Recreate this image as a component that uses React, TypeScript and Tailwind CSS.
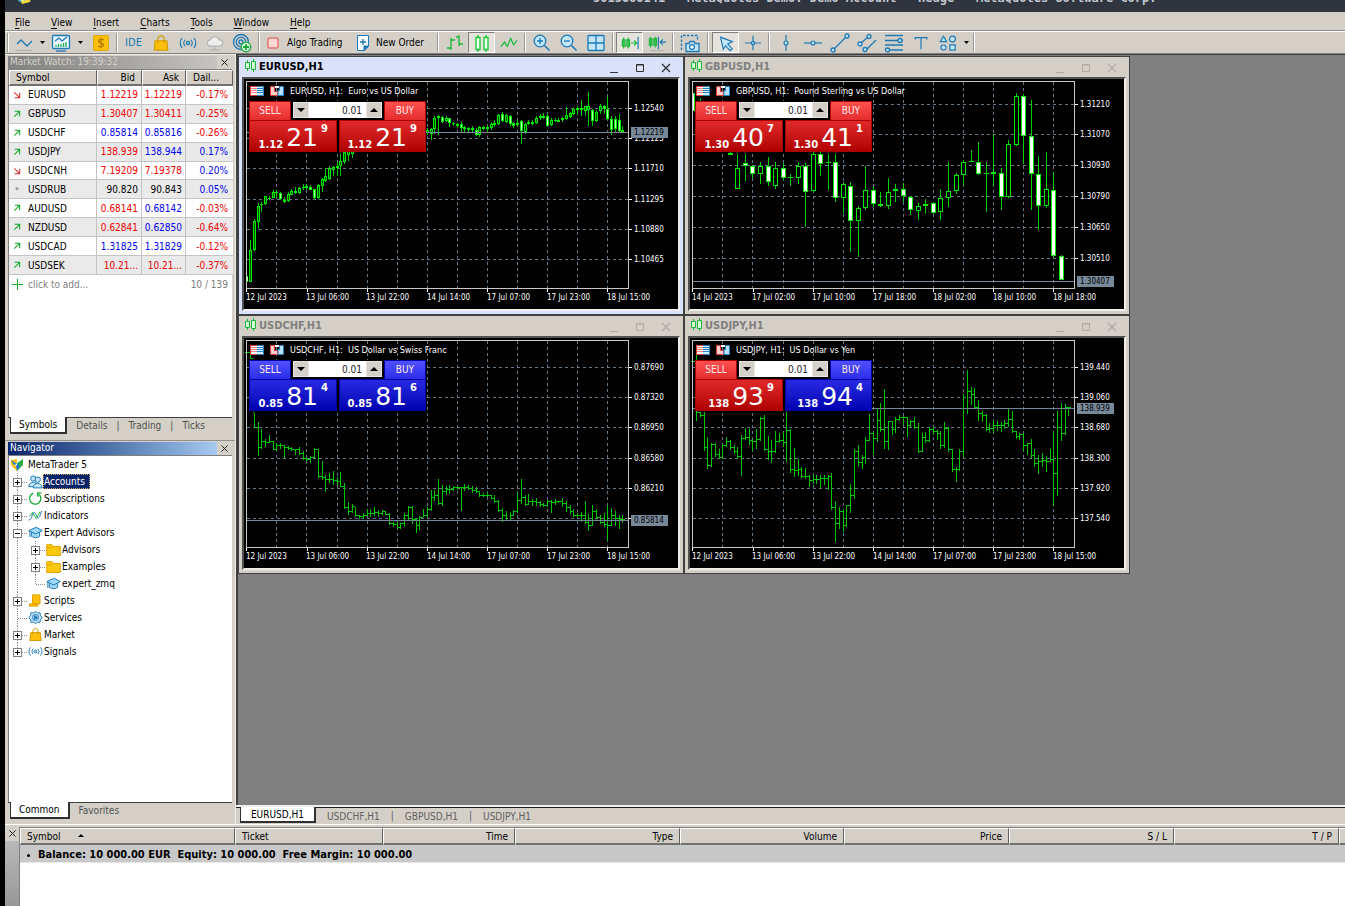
import React from "react";

/* ---------- chart data (pane units are thirds of a pixel) ---------- */

// [slot, high, low, bodyTop, bodyBottom, falling]
type Candle = [number, number, number, number, number, number];
// [high, low, close]
type Bar = [number, number, number];

const EUR: Candle[] = [
  [0, 660, 684, 664, 680, 1], [1, 555, 682, 586, 680, 0], [2, 492, 588, 498, 586, 0], [3, 445, 522, 452, 500, 0],
  [4, 440, 470, 448, 451, 0], [5, 422, 450, 424, 448, 0], [6, 424, 435, 428, 431, 1], [7, 406, 430, 411, 429, 0],
  [8, 406, 425, 411, 415, 1], [9, 411, 434, 413, 432, 1], [10, 425, 443, 434, 441, 0], [11, 410, 440, 418, 437, 0],
  [12, 402, 420, 408, 419, 0], [13, 395, 418, 409, 413, 0], [14, 396, 418, 398, 414, 0], [15, 386, 404, 395, 398, 0],
  [16, 388, 404, 394, 398, 1], [17, 390, 406, 396, 404, 1], [18, 401, 431, 403, 429, 1], [19, 388, 431, 390, 429, 0],
  [20, 368, 412, 372, 392, 0], [21, 340, 382, 362, 378, 0], [22, 334, 374, 338, 372, 0], [23, 334, 362, 337, 346, 0],
  [24, 322, 362, 334, 340, 0], [25, 296, 362, 318, 332, 0], [26, 285, 328, 290, 322, 0], [27, 280, 318, 285, 300, 0],
  [28, 270, 308, 280, 298, 0], [48, 220, 240, 225, 235, 0], [49, 220, 255, 222, 236, 0], [50, 182, 237, 190, 222, 0],
  [51, 180, 240, 184, 190, 0], [52, 182, 205, 186, 202, 1], [53, 183, 200, 188, 198, 0], [54, 188, 215, 190, 205, 1],
  [55, 200, 214, 203, 208, 1], [56, 204, 220, 208, 213, 1], [57, 202, 234, 208, 220, 1], [58, 212, 232, 215, 221, 1],
  [59, 216, 232, 218, 224, 1], [60, 214, 230, 220, 225, 1], [61, 220, 243, 224, 239, 1], [62, 212, 245, 217, 240, 0],
  [63, 214, 224, 217, 221, 0], [64, 210, 234, 216, 222, 0], [65, 202, 224, 206, 220, 0], [66, 196, 216, 204, 210, 0],
  [67, 176, 210, 180, 206, 0], [68, 170, 200, 178, 198, 1], [69, 178, 205, 180, 200, 0], [70, 180, 212, 184, 208, 1],
  [71, 200, 220, 205, 212, 1], [72, 196, 214, 205, 210, 0], [73, 196, 268, 199, 228, 1], [74, 204, 238, 208, 232, 0],
  [75, 196, 210, 202, 208, 0], [76, 195, 210, 200, 206, 0], [77, 184, 206, 188, 204, 0], [78, 178, 196, 184, 190, 0],
  [79, 174, 192, 182, 188, 0], [80, 178, 214, 182, 212, 1], [81, 188, 212, 194, 210, 0], [82, 190, 202, 194, 198, 0],
  [83, 188, 202, 194, 200, 0], [84, 186, 200, 190, 195, 0], [85, 156, 196, 180, 192, 0], [86, 170, 190, 174, 186, 0],
  [87, 158, 180, 163, 176, 0], [88, 154, 178, 160, 166, 0], [89, 136, 184, 158, 166, 0], [90, 152, 184, 154, 168, 0],
  [91, 110, 214, 154, 164, 0], [92, 162, 212, 166, 198, 1], [93, 166, 200, 170, 198, 0], [94, 146, 176, 154, 168, 0],
  [95, 150, 176, 152, 162, 1], [96, 125, 196, 162, 192, 1], [97, 184, 240, 192, 226, 1], [98, 182, 230, 192, 222, 1],
  [99, 178, 232, 194, 228, 1], [100, 214, 232, 226, 231, 1],
];

const GBP: Candle[] = [
  [0, 110, 170, 115, 168, 1], [1, 130, 180, 150, 170, 0], [5, 290, 300, 295, 299, 0], [6, 296, 403, 340, 401, 0],
  [7, 296, 378, 324, 334, 1], [8, 330, 370, 334, 356, 1], [9, 322, 388, 332, 358, 0], [10, 306, 394, 332, 382, 1],
  [11, 322, 402, 340, 392, 0], [12, 324, 374, 340, 368, 1], [13, 356, 392, 365, 368, 0], [14, 320, 388, 334, 368, 0],
  [15, 324, 515, 334, 410, 1], [16, 290, 412, 296, 408, 0], [17, 290, 362, 296, 326, 1], [18, 296, 404, 321, 324, 0],
  [19, 296, 440, 322, 428, 1], [20, 382, 474, 388, 428, 0], [21, 380, 592, 392, 498, 1], [22, 452, 607, 458, 498, 0],
  [23, 334, 466, 406, 460, 0], [24, 394, 456, 406, 446, 1], [25, 412, 456, 446, 452, 1], [26, 370, 462, 412, 452, 0],
  [27, 388, 440, 402, 408, 0], [28, 384, 440, 402, 424, 1], [29, 424, 480, 426, 466, 1], [30, 444, 496, 454, 468, 0],
  [31, 432, 478, 446, 454, 0], [32, 442, 476, 444, 474, 1], [33, 402, 496, 430, 472, 0], [34, 320, 456, 408, 430, 0],
  [35, 354, 418, 360, 408, 0], [36, 314, 390, 322, 360, 0], [37, 284, 322, 319, 322, 0], [38, 262, 360, 322, 358, 1],
  [39, 320, 470, 355, 358, 0], [40, 236, 392, 352, 358, 0], [41, 338, 464, 354, 426, 1], [42, 256, 428, 268, 426, 0],
  [43, 114, 272, 124, 270, 0], [44, 116, 326, 122, 244, 1], [45, 136, 466, 242, 358, 1], [46, 304, 526, 356, 454, 1],
  [47, 292, 460, 402, 452, 0], [48, 352, 610, 404, 604, 1], [49, 600, 676, 604, 676, 1],
];

const CHF: Bar[] = [
  [110, 114, 112], [112, 132, 130], [292, 338, 336], [320, 422, 397], [342, 400, 380], [370, 396, 381], [360, 384, 380],
  [376, 404, 402], [382, 406, 390], [384, 402, 392], [388, 428, 396], [392, 404, 400], [394, 408, 404], [400, 418, 402],
  [394, 420, 414], [406, 434, 430], [424, 438, 434], [422, 442, 428], [398, 432, 402], [400, 488, 484], [438, 494, 488],
  [480, 530, 492], [474, 502, 494], [468, 510, 496], [486, 508, 500], [470, 516, 514], [502, 580, 577], [560, 600, 588],
  [566, 594, 575], [574, 604, 602], [598, 610, 604], [594, 610, 600], [580, 602, 596], [584, 606, 596], [576, 602, 592],
  [584, 606, 594], [584, 600, 590], [586, 600, 598], [594, 630, 626], [620, 634, 628], [620, 642, 636], [622, 640, 626],
  [594, 636, 600], [572, 618, 576], [572, 626, 612], [608, 652, 630], [602, 644, 606], [582, 606, 602], [576, 606, 584],
  [524, 588, 546], [524, 556, 540], [490, 570, 564], [510, 572, 530], [512, 540, 524], [508, 536, 522], [512, 526, 518],
  [512, 524, 518], [514, 586, 518], [506, 526, 518], [508, 524, 520], [512, 532, 526], [516, 532, 530], [526, 546, 540],
  [532, 546, 540], [530, 546, 542], [538, 552, 550], [540, 562, 558], [554, 590, 586], [578, 620, 600], [586, 618, 616],
  [590, 618, 600], [584, 602, 590], [530, 594, 556], [492, 566, 546], [540, 572, 568], [536, 570, 560], [552, 572, 558],
  [548, 572, 562], [558, 576, 568], [564, 576, 572], [554, 574, 560], [554, 592, 562], [552, 568, 560], [556, 564, 560],
  [548, 574, 566], [558, 590, 578], [570, 596, 590], [580, 606, 600], [592, 606, 602], [590, 620, 600], [556, 626, 622],
  [596, 646, 632], [570, 632, 590], [580, 610, 606], [600, 626, 622], [594, 634, 628], [572, 676, 630], [578, 632, 600],
  [586, 632, 610], [600, 642, 614], [598, 622, 612],
];

const JPY: Bar[] = [
  [136, 140, 138], [110, 316, 292], [290, 306, 302], [290, 406, 398], [366, 462, 450], [382, 454, 388], [384, 424, 418],
  [402, 430, 426], [388, 430, 392], [366, 396, 378], [374, 404, 396], [390, 416, 408], [394, 430, 424], [360, 482, 370],
  [338, 374, 366], [340, 388, 376], [370, 406, 380], [342, 400, 374], [304, 378, 310], [298, 408, 404], [362, 434, 408],
  [374, 444, 410], [348, 414, 380], [354, 384, 376], [350, 396, 382], [290, 440, 346], [342, 474, 464], [398, 486, 466],
  [432, 482, 462], [456, 488, 484], [458, 490, 484], [480, 516, 496], [478, 506, 494], [480, 506, 492], [478, 518, 490],
  [480, 508, 490], [480, 524, 484], [472, 584, 576], [558, 680, 626], [576, 642, 588], [580, 650, 632], [568, 634, 572],
  [506, 592, 540], [400, 550, 410], [388, 452, 442], [420, 462, 426], [366, 446, 376], [296, 376, 356], [350, 416, 370],
  [280, 380, 316], [262, 350, 344], [222, 402, 380], [316, 404, 320], [318, 358, 342], [304, 352, 312], [300, 316, 306],
  [302, 330, 306], [304, 364, 330], [314, 334, 318], [306, 340, 338], [324, 412, 408], [352, 410, 366], [350, 384, 376],
  [334, 380, 342], [334, 358, 350], [344, 374, 354], [346, 402, 392], [320, 398, 340], [334, 410, 404], [402, 470, 464],
  [456, 500, 464], [400, 468, 410], [236, 424, 280], [164, 296, 230], [214, 270, 238], [218, 280, 276], [254, 316, 296],
  [286, 320, 300], [296, 348, 344], [324, 354, 340], [318, 354, 330], [316, 346, 330], [320, 350, 330], [314, 342, 326],
  [280, 336, 314], [286, 354, 350], [346, 370, 364], [352, 374, 358], [354, 406, 392], [382, 420, 384], [370, 428, 422],
  [402, 456, 446], [420, 476, 440], [412, 456, 436], [422, 470, 440], [402, 440, 434], [346, 572, 474], [288, 542, 336],
  [262, 378, 354], [266, 360, 278], [274, 302, 278],
];

const px = (v: number) => Math.round(v / 3);

function Candles({ data, pitch, width }: { data: Candle[]; pitch: number; width: number }) {
  const half = (width - 1) / 2;
  return (
    <g shapeRendering="crispEdges">
      {data.map(([i, h, l, t, b, down]) => {
        const x = px(25 + pitch * i);
        const top = px(t);
        const bodyH = Math.max(1, px(b) - top);
        const left = Math.max(8, x - half);
        return (
          <g key={i}>
            <rect x={x} y={px(h)} width={1} height={Math.max(1, px(l) - px(h))} fill="#00d000" />
            <rect x={left} y={top} width={x + half + 1 - left} height={bodyH} fill="#00ee00" />
            {bodyH > 2 && (
              <rect
                x={left + 1}
                y={top + 1}
                width={Math.max(1, x + half - left - 1)}
                height={bodyH - 2}
                fill={down ? (width > 3 ? "#ffffff" : "#b0ffb0") : width > 3 ? "#000000" : "#005000"}
              />
            )}
          </g>
        );
      })}
    </g>
  );
}

function Bars({ data }: { data: Bar[] }) {
  return (
    <g shapeRendering="crispEdges" fill="#00c800">
      {data.map(([h, l, c], i) => {
        const x = px(25 + 11.28 * i);
        const open = i ? data[i - 1][2] : c;
        const o = Math.min(Math.max(open, h), l);
        return (
          <g key={i}>
            <rect x={x} y={px(h + 4)} width={1} height={Math.max(1, px(l + 4) - px(h + 4))} />
            <rect x={x - 1} y={px(o + 2)} width={1} height={1} />
            <rect x={x + 1} y={px(c + 2)} width={2} height={1} />
          </g>
        );
      })}
    </g>
  );
}

type ChartSpec = {
  symbol: string;
  name: string;
  active?: boolean;
  sell: [string, string, string];
  buy: [string, string, string];
  sellUp?: boolean;
  buyUp?: boolean;
  grid: number[];
  scale: string[];
  dates: string[];
  price: string;
  priceY: number;
  series: React.ReactNode;
};

const DATES = ["12 Jul 2023", "13 Jul 06:00", "13 Jul 22:00", "14 Jul 14:00", "17 Jul 07:00", "17 Jul 23:00", "18 Jul 15:00"];
const EVEN = [160, 250, 340, 431, 521, 611];

const CHARTS: ChartSpec[] = [
  {
    symbol: "EURUSD", name: "Euro vs US Dollar", active: true, sell: ["1.12", "21", "9"], buy: ["1.12", "21", "9"],
    grid: EVEN, scale: ["1.12540", "1.12125", "1.11710", "1.11295", "1.10880", "1.10465"], dates: DATES,
    price: "1.12219", priceY: 231, series: <Candles data={EUR} pitch={11.28} width={3} />,
  },
  {
    symbol: "GBPUSD", name: "Pound Sterling vs US Dollar", sell: ["1.30", "40", "7"], buy: ["1.30", "41", "1"],
    grid: [146, 237, 329, 422, 516, 608], scale: ["1.31210", "1.31070", "1.30930", "1.30790", "1.30650", "1.30510"],
    dates: ["14 Jul 2023", "17 Jul 02:00", "17 Jul 10:00", "17 Jul 18:00", "18 Jul 02:00", "18 Jul 10:00", "18 Jul 18:00"],
    price: "1.30407", priceY: 677, series: <Candles data={GBP} pitch={22.56} width={5} />,
  },
  {
    symbol: "USDCHF", name: "US Dollar vs Swiss Franc", sell: ["0.85", "81", "4"], buy: ["0.85", "81", "6"], sellUp: true, buyUp: true,
    grid: EVEN, scale: ["0.87690", "0.87320", "0.86950", "0.86580", "0.86210", ""], dates: DATES,
    price: "0.85814", priceY: 617, series: <Bars data={CHF} />,
  },
  {
    symbol: "USDJPY", name: "US Dollar vs Yen", sell: ["138", "93", "9"], buy: ["138", "94", "4"], buyUp: true,
    grid: EVEN, scale: ["139.440", "139.060", "138.680", "138.300", "137.920", "137.540"], dates: DATES,
    price: "138.939", priceY: 281, series: <Bars data={JPY} />,
  },
];

function PlotArea({ spec }: { spec: ChartSpec }) {
  return (
    <svg
      viewBox="6 24 434 230"
      width={434}
      height={230}
      className="block bg-black font-['DejaVu_Sans_Condensed','DejaVu_Sans',sans-serif] text-[8px]"
      role="img"
      aria-label={`${spec.symbol} hourly chart`}
    >
      <g stroke="#66778a" strokeDasharray="3 3" shapeRendering="crispEdges">
        {Array.from({ length: 12 }, (_, k) => {
          const x = px(115 + 90.25 * k) + 0.5;
          return <path key={k} d={`M${x} 27V234`} />;
        })}
        {spec.grid.map((y) => (
          <path key={y} d={`M9 ${px(y) + 0.5}H391`} />
        ))}
      </g>
      {spec.series}
      <path d={`M9 ${px(spec.priceY) + 0.5}H391`} stroke="#778899" shapeRendering="crispEdges" />
      <rect x="8.5" y="26.5" width="382" height="207" fill="none" stroke="#c8c8c8" shapeRendering="crispEdges" />
      <g fill="#fff">
        {spec.grid.map((y, i) => (
          <g key={y}>
            <rect x="391" y={px(y)} width="3" height="1" />
            <text x="396" y={px(y) + 3}>{spec.scale[i]}</text>
          </g>
        ))}
        {spec.dates.map((d, i) => (
          <g key={d}>
            <rect x={px(25 + 180.5 * i)} y="234" width="1" height="3" />
            <text x={px(24 + 180.5 * i)} y="245">{d}</text>
          </g>
        ))}
        <text x="52" y="39" className="text-[9px]">{`${spec.symbol}, H1:\u00a0 ${spec.name}`}</text>
      </g>
      <rect x="393" y={px(spec.priceY) - 5} width="37" height="11" fill="#778899" />
      <text x="396" y={px(spec.priceY) + 3} fill="#000">{spec.price}</text>
      <g>
        <rect x="12.5" y="31.5" width="13" height="9" fill="#fff" stroke="#e33b36" />
        <path d="M19 31.5h6.500v9H19" fill="#d8eeff" stroke="#2383c4" />
        <path d="M13 33.500h6M13 35.500h6M13 37.500h6" stroke="#f0847c" />
        <path d="M19 33.500h6M19 35.500h6M19 37.500h6" stroke="#2383c4" />
        <path d="M32.500 31.500h4v5l3 0v4h-7z" fill="#ffd0cc" stroke="#e33b36" />
        <path d="M45.500 31.500h-4v4h-1.500v5h5.500z" fill="#b8e0ff" stroke="#2383c4" />
        <path d="M37 31h4v2h-4z" fill="#fff" />
      </g>
    </svg>
  );
}

function PriceButton({ side, parts, up, right }: { side: string; parts: [string, string, string]; up?: boolean; right?: boolean }) {
  return (
    <button
      aria-label={`${side} at ${parts.join("")}`}
      className={`relative flex h-8 items-end justify-end gap-[3px] border pr-2 text-white ${
        right ? "w-[87px]" : "w-[88px]"
      } ${up ? "border-[#0000a0] bg-linear-to-b from-[#2828e4] to-[#0000b0]" : "border-[#a80000] bg-linear-to-b from-[#e22828] to-[#b00000]"}`}
    >
      <span className="text-[10px] leading-3 font-bold">{parts[0]}</span>
      <span className="text-[25px] leading-[27px]">{parts[1]}</span>
      <span className="self-start pt-[2px] text-[10px] leading-3 font-bold">{parts[2]}</span>
    </button>
  );
}

function SideTab({ label, up }: { label: string; up?: boolean }) {
  return (
    <button
      className={`h-[19px] w-[42px] border border-b-0 px-[3px] font-['DejaVu_Sans_Condensed','DejaVu_Sans',sans-serif] text-[10px] leading-[18px] text-[#ffe8e8] ${
        up ? "border-[#0000a0] bg-linear-to-b from-[#5050ff] to-[#2c2ce8]" : "border-[#a80000] bg-linear-to-b from-[#ff5050] to-[#e42c2c]"
      }`}
    >
      <span className={`block border-b ${up ? "border-[#0000a8]" : "border-[#b80000]"}`}>{label}</span>
    </button>
  );
}

function TradePanel({ spec }: { spec: ChartSpec }) {
  return (
    <div className="absolute top-[22px] left-[5px] w-[177px] bg-black font-['DejaVu_Sans',sans-serif]">
      <div className="flex justify-between">
        <SideTab label="SELL" up={spec.sellUp} />
        <div className="mt-px flex h-4 w-[89px] text-black">
          <button aria-label="Decrease volume" className="grid w-4 place-items-center border border-[#e8e6e0] bg-[#d4d0c8]">
            <Caret />
          </button>
          <input
            aria-label={`${spec.symbol} volume`}
            defaultValue="0.01"
            className="w-0 min-w-0 flex-1 bg-white pr-1 text-right font-['DejaVu_Sans_Condensed','DejaVu_Sans',sans-serif] text-[10px] text-[#222] outline-none"
          />
          <button aria-label="Increase volume" className="grid w-4 place-items-center border border-[#e8e6e0] bg-[#d4d0c8]">
            <Caret up />
          </button>
        </div>
        <SideTab label="BUY" up={spec.buyUp} />
      </div>
      <div className="flex justify-between">
        <PriceButton side="Sell" parts={spec.sell} up={spec.sellUp} />
        <PriceButton side="Buy" parts={spec.buy} up={spec.buyUp} right />
      </div>
    </div>
  );
}

function ChartWindow({ spec }: { spec: ChartSpec }) {
  const tone = spec.active ? "bg-[#d9e1fb] text-black" : "bg-[#d4d0c8] text-[#808080]";
  const mark = spec.active ? "#303030" : "#b0aca4";
  return (
    <section className={`h-[259px] w-[446px] border border-[#404040] px-[3px] ${tone}`}>
      <header className="flex h-5 items-center pb-[2px] pl-[3px]">
        <svg width="12" height="14" viewBox="0 0 12 14" fill="#d8ffd8" stroke="#18b838">
          <path d="M2.500 1v11M8.500 0v13" />
          <path d="M.5 3.500h4v6h-4zM6.500 2.500h4v8h-4z" />
        </svg>
        <h2 className="ml-[2px] font-['DejaVu_Sans_Condensed','DejaVu_Sans',sans-serif] text-[11px] font-bold">{spec.symbol},H1</h2>
        <div className="ml-auto flex gap-3 pt-1 pr-[7px]">
          <button aria-label="Minimize">
            <svg width="14" height="12" viewBox="0 0 14 12"><path d="M3 10.500h8" stroke={mark} /></svg>
          </button>
          <button aria-label="Maximize">
            <svg width="14" height="12" viewBox="0 0 14 12" fill="none"><path d="M3.500 2.500h7v7h-7zM3 3h8" stroke={mark} /></svg>
          </button>
          <button aria-label="Close">
            <svg width="14" height="12" viewBox="0 0 14 12"><path d="M3 2l8 8M11 2l-8 8" stroke={mark} strokeWidth="1.300" /></svg>
          </button>
        </div>
      </header>
      <div className="relative border-2 border-t-[#505050] border-r-[#f0eee8] border-b-[#f0eee8] border-l-[#505050]">
        <PlotArea spec={spec} />
        <TradePanel spec={spec} />
      </div>
    </section>
  );
}

/* ---------- small drawing helpers ---------- */

function Caret({ up }: { up?: boolean }) {
  return (
    <svg width="8" height="4" viewBox="0 0 8 4">
      <path d={up ? "M0 4L4 0L8 4z" : "M0 0L4 4L8 0z"} fill="#000" />
    </svg>
  );
}

function Ico({ children, size = 20 }: { children: React.ReactNode; size?: number }) {
  return (
    <svg width={size} height={size} viewBox="0 0 20 20" fill="none" stroke="#1d78b5" strokeWidth="1.300">
      {children}
    </svg>
  );
}

function Tool({ label, on, children, w = "w-[27px]" }: { label: string; on?: boolean; children: React.ReactNode; w?: string }) {
  return (
    <button
      aria-label={label}
      title={label}
      className={`grid h-[21px] shrink-0 place-items-center ${w} ${
        on ? "border border-t-[#808080] border-r-white border-b-white border-l-[#808080] bg-[#e6e3dd]" : ""
      }`}
    >
      {children}
    </button>
  );
}

function Sep({ w = "w-[6px]" }: { w?: string }) {
  return (
    <span className={`flex h-[19px] shrink-0 justify-center ${w}`}>
      <span className="w-[2px] border-r border-l border-r-white border-l-[#999]" />
    </span>
  );
}

function ToolArrow({ w }: { w: string }) {
  return (
    <button aria-label="More options" className={`grid shrink-0 place-items-center ${w}`}>
      <svg width="5" height="3" viewBox="0 0 5 3"><path d="M0 0h5L2.500 3z" fill="#000" /></svg>
    </button>
  );
}

const BAG = (
  <g stroke="#d79a00">
    <path d="M3.500 7.500h13l1 10.500h-15z" fill="#fcc00c" />
    <path d="M6.500 10V5.500a3.500 3.500 0 0 1 7 0V10" />
  </g>
);
const CAP = (
  <g fill="#9fd8fa">
    <path d="M4.500 9v6c3 2.500 8 2.500 11 0V9" />
    <path d="M1 7.500L11 3l8 4.500L10 12z" />
    <path d="M2.500 8v8" />
  </g>
);
const WAVES = (
  <g>
    <circle cx="10" cy="10" r="1.800" fill="#9fd8fa" />
    <path d="M6.800 6.500a5 5 0 0 0 0 7M13.200 6.500a5 5 0 0 1 0 7M3.500 4.500a8 8 0 0 0 0 11M16.500 4.500a8 8 0 0 1 0 11" />
  </g>
);

function Toolbar() {
  return (
    <div role="toolbar" className="flex h-[23px] items-center border-t border-b border-t-white border-b-[#808080]">
      <Sep w="w-[5px]" />
      <Tool label="Chart type"><Ico><path d="M3 11l4-4 6 6 5-5" /><path d="M2 17.500h16" stroke="#b0b0b0" /></Ico></Tool>
      <ToolArrow w="w-[10px]" />
      <Tool label="Templates">
        <Ico><rect x="1.500" y="2.500" width="17" height="13" rx="1" fill="#e8f6ff" /><path d="M4 8l4-3 3 3 5-4" /><path d="M5 14v-2M7.500 14v-3M10 14v-3M12.500 14v-4M15 14v-5" stroke="#22b14c" /><path d="M5 18h10" /></Ico>
      </Tool>
      <ToolArrow w="w-[13px]" />
      <Tool label="Deposits">
        <svg width="18" height="18" viewBox="0 0 18 18">
          <rect x="1.500" y="1.500" width="15" height="15" rx="1" fill="#fcc00c" stroke="#e0a800" />
          <path d="M12 6.200C11 5 7 4.800 6.500 7c-.2 2.600 5.400 1.600 5.300 4.200C11.500 13.500 7 13.200 6 11.800M9 3.500v11" fill="none" stroke="#b07800" strokeWidth="1.200" />
        </svg>
      </Tool>
      <Sep />
      <Tool label="MetaEditor"><span className="text-[11px] leading-4 text-[#1d78b5]">IDE</span></Tool>
      <Tool label="Market"><Ico size={18}>{BAG}</Ico></Tool>
      <Tool label="Signals"><Ico size={18}>{WAVES}</Ico></Tool>
      <Tool label="Virtual hosting"><Ico size={18}><g stroke="#b4b4b4"><path d="M5 13.500a3.500 3.500 0 0 1 0-7a5 5 0 0 1 9.500 0a3.500 3.500 0 0 1 1 7z" fill="#eee" /><path d="M10 14v4M4 18h12" /></g></Ico></Tool>
      <Tool label="Community">
        <Ico><circle cx="9" cy="9" r="7.500" /><circle cx="9" cy="9" r="4.800" /><circle cx="9" cy="9" r="2" /><circle cx="14" cy="14" r="4.800" fill="#d8ffe0" stroke="#18a838" /><path d="M14 11v6M11 14h6" stroke="#18a838" strokeWidth="1.800" /></Ico>
      </Tool>
      <Sep w="w-[7px]" />
      <button className="flex w-[86px] shrink-0 items-center gap-2 pl-[5px]">
        <svg width="12" height="12" viewBox="0 0 12 12"><rect x="1" y="1" width="10" height="10" rx="1" fill="#fdd8d4" stroke="#e0443c" /></svg>
        <span className="whitespace-nowrap">Algo Trading</span>
      </button>
      <button className="flex w-[87px] shrink-0 items-center gap-[6px] pl-2">
        <svg width="14" height="18" viewBox="0 0 14 18" fill="#f4fbff" stroke="#1d78b5"><path d="M1.500 1.500h11v11l-4 4h-7z" /><path d="M12.500 12l-4.500 4.500V12z" fill="#1d78b5" /><path d="M7 5v6M4 8h6" strokeWidth="1.300" /></svg>
        <span className="whitespace-nowrap">New Order</span>
      </button>
      <Sep />
      <Tool label="Bar chart"><Ico><path d="M6 5v12M2 15h4M6 7h4M14 2v11M11 4h3M14 11h4" stroke="#18b838" /></Ico></Tool>
      <Tool label="Candlesticks" on><Ico><path d="M6 2v17M14 2v17" stroke="#18b838" /><path d="M4 4.500h4v12H4zM12 4.500h4v12h-4z" fill="#eaffea" stroke="#18c838" /></Ico></Tool>
      <Tool label="Line chart"><Ico size={18}><path d="M1 14l4-5 3 5 4-9 3 7 4-5" stroke="#18b838" /></Ico></Tool>
      <Sep />
      <Tool label="Zoom in"><Ico><circle cx="8" cy="8" r="5.800" fill="#c4e6fc" /><path d="M12.500 12.500l5 5" strokeWidth="1.600" /><path d="M8 5v6M5 8h6" /></Ico></Tool>
      <Tool label="Zoom out"><Ico><circle cx="8" cy="8" r="5.800" fill="#c4e6fc" /><path d="M12.500 12.500l5 5" strokeWidth="1.600" /><path d="M5 8h6" /></Ico></Tool>
      <Tool label="Tile windows"><Ico><rect x="2" y="2.500" width="16" height="15" rx="1" fill="#c4e6fc" /><path d="M10 2.500v15M2 10h16" /></Ico></Tool>
      <Sep w="w-[7px]" />
      <Tool label="Auto scroll" on><Ico size={18}><path d="M3 4v12M8 4v12M1.500 6.500h3v7h-3zM6.500 6.500h3v7h-3zM11 10h6M14.500 7l3 3-3 3" stroke="#18b838" /><path d="M19 3v14" /></Ico></Tool>
      <Tool label="Chart shift"><Ico size={18}><path d="M3 3v12M8 3v12M1.500 5.500h3v7h-3zM6.500 5.500h3v7h-3z" stroke="#18b838" /><path d="M11.500 3v14M20 9h-6M16.500 6l-3 3 3 3" /><path d="M2 18.500h16" stroke="#b0b0b0" /></Ico></Tool>
      <Sep />
      <Tool label="Screenshot"><Ico><path d="M1.500 17V2.500h16V8" strokeDasharray="2.500 1.500" /><path d="M6 10.500h3l1-2h4l1 2h4v8H6z" fill="#c4e6fc" /><circle cx="12" cy="14" r="2.400" fill="#fff" /></Ico></Tool>
      <Sep w="w-[9px]" />
      <Tool label="Cursor" on><Ico size={18}><path d="M4 3.500l13 5-5 2.500 5 5.500-2.500 2-5-5.500-2.500 4z" fill="#c4e6fc" /></Ico></Tool>
      <Tool label="Crosshair"><Ico size={18}><path d="M10 2v16M1 10h18" /><circle cx="10" cy="10" r="1.800" fill="#9fd8fa" /></Ico></Tool>
      <Sep />
      <Tool label="Vertical line"><Ico size={18}><path d="M10 1v18" /><circle cx="10" cy="10" r="2.200" fill="#c4e6fc" /></Ico></Tool>
      <Tool label="Horizontal line"><Ico size={18}><path d="M0 10h20" /><circle cx="10" cy="10" r="2.200" fill="#c4e6fc" /></Ico></Tool>
      <Tool label="Trendline"><Ico><path d="M3 17L17 3" /><circle cx="3" cy="17" r="2" fill="#c4e6fc" /><circle cx="17" cy="3" r="2" fill="#c4e6fc" /></Ico></Tool>
      <Tool label="Channel"><Ico><path d="M3 11l9-8M9 17l10-10" /><circle cx="3" cy="11" r="2" fill="#c4e6fc" /><circle cx="12" cy="3.500" r="2" fill="#c4e6fc" /><circle cx="8" cy="16.500" r="2" fill="#c4e6fc" /></Ico></Tool>
      <Tool label="Fibonacci"><Ico><path d="M1 2.500h18M1 7.500h18M1 12h18M1 17h18" /><circle cx="16" cy="7.500" r="2" fill="#c4e6fc" /><circle cx="3.500" cy="17" r="2" fill="#c4e6fc" /></Ico></Tool>
      <Tool label="Text label"><Ico size={18}><path d="M3.500 6V4h13v2M10 4v13" /></Ico></Tool>
      <Tool label="Shapes"><Ico size={18}><path d="M5 2.500l3.500 6h-7z" fill="#c4e6fc" /><circle cx="15" cy="5.500" r="3.200" fill="#c4e6fc" /><circle cx="5" cy="15" r="2.800" fill="#c4e6fc" /><path d="M12 12h6v6h-6z" fill="#c4e6fc" /></Ico></Tool>
      <ToolArrow w="w-[10px]" />
      <Sep />
    </div>
  );
}

const MENU = ["File", "View", "Insert", "Charts", "Tools", "Window", "Help"];

/* ---------- market watch ---------- */

type Quote = [string, "u" | "d" | "n", string, string, string, string, string, string];
const R = "text-[#f00000]";
const B = "text-[#0000f0]";
const K = "text-black";
const QUOTES: Quote[] = [
  ["EURUSD", "d", "1.12219", R, "1.12219", R, "-0.17%", R],
  ["GBPUSD", "u", "1.30407", R, "1.30411", R, "-0.25%", R],
  ["USDCHF", "u", "0.85814", B, "0.85816", B, "-0.26%", R],
  ["USDJPY", "u", "138.939", R, "138.944", B, "0.17%", B],
  ["USDCNH", "d", "7.19209", R, "7.19378", R, "0.20%", B],
  ["USDRUB", "n", "90.820", K, "90.843", K, "0.05%", B],
  ["AUDUSD", "u", "0.68141", R, "0.68142", B, "-0.03%", R],
  ["NZDUSD", "u", "0.62841", R, "0.62850", B, "-0.64%", R],
  ["USDCAD", "u", "1.31825", B, "1.31829", B, "-0.12%", R],
  ["USDSEK", "u", "10.21...", R, "10.21...", R, "-0.37%", R],
];

function Trend({ dir }: { dir: "u" | "d" | "n" }) {
  return (
    <svg width="8" height="8" viewBox="0 0 9 9" fill="none" strokeWidth="1.200" className="shrink-0">
      {dir === "u" && <path d="M1.500 7.500l6-6M2 1.500h5.500V7" stroke="#10a828" />}
      {dir === "d" && <path d="M1.500 1.500l6 6M7.500 2v5.500H2" stroke="#d83028" />}
      {dir === "n" && <circle cx="4.500" cy="4" r="1.800" fill="#a0a0a0" />}
    </svg>
  );
}

function Caption({ title, active }: { title: string; active?: boolean }) {
  return (
    <div className="flex h-[13px] items-center">
      <h2
        className={`h-full flex-1 pl-[2px] leading-[12px] ${
          active ? "bg-linear-to-r from-[#0a246a] to-[#a6caf0] text-white" : "bg-linear-to-r from-[#808080] to-[#c6c4c0] text-[#d4d0c8]"
        }`}
      >
        {title}
      </h2>
      <CloseX />
    </div>
  );
}

function CloseX() {
  return (
    <button aria-label="Close panel" className="grid h-[13px] w-[15px] place-items-center">
      <svg width="7" height="7" viewBox="0 0 7 7"><path d="M.5.5l6 6M6.500.5l-6 6" stroke="#222" /></svg>
    </button>
  );
}

function Tabs({ first, rest }: { first: string; rest: string[] }) {
  return (
    <div role="tablist" className="flex h-[18px] shrink-0 items-start border-t border-[#404040] pl-[2px]">
      <button role="tab" aria-selected="true" className="-mt-px h-[17px] border-r-2 border-b-2 border-l border-[#303030] bg-white px-2 text-black">
        {first}
      </button>
      {rest.map((t, i) => (
        <span key={t} className="flex pl-[9px] text-[#505050]">
          {i > 0 && <span className="mr-[9px]">|</span>}
          <button role="tab" aria-selected="false">{t}</button>
        </span>
      ))}
    </div>
  );
}

function MarketWatch() {
  const head = "h-4 border-t border-r border-l border-b-2 border-t-white border-l-white border-r-[#606060] border-b-[#707070] bg-[#d4d0c8] py-0 font-normal leading-[13px]";
  return (
    <section className="flex h-[385px] shrink-0 flex-col px-[3px] pt-px pb-[5px]">
      <Caption title="Market Watch: 19:39:32" />
      <div className="flex-1 border-t border-l border-[#808080] bg-white">
        <table className="h-[205px] w-full table-fixed border-separate border-spacing-0">
          <colgroup>
            <col className="w-[88px]" /><col className="w-[45px]" /><col className="w-[44px]" /><col className="w-[47px]" />
          </colgroup>
          <thead>
            <tr className="h-4">
              <th className={`${head} pl-[6px] text-left`}>Symbol</th>
              <th className={`${head} pr-[6px] text-right`}>Bid</th>
              <th className={`${head} pr-[6px] text-right`}>Ask</th>
              <th className={`${head} pl-[6px] text-left`}>Dail...</th>
            </tr>
          </thead>
          <tbody>
            {QUOTES.map(([s, d, bid, bc, ask, ac, day, dc], i) => (
              <tr key={s} className={`leading-[15px] ${i % 2 ? "bg-[#eaeaea]" : "bg-white"}`}>
                <td className="border-r border-b border-[#c4c4c4] py-0 pl-1">
                  <span className="flex items-center gap-[7px]"><Trend dir={d} />{s}</span>
                </td>
                <td className={`border-r border-b border-[#c4c4c4] py-0 pr-[3px] text-right ${bc}`}>{bid}</td>
                <td className={`border-r border-b border-[#c4c4c4] py-0 pr-[3px] text-right ${ac}`}>{ask}</td>
                <td className={`border-b border-[#c4c4c4] py-0 pr-[5px] text-right ${dc}`}>{day}</td>
              </tr>
            ))}
          </tbody>
        </table>
        <div className="flex h-[18px] items-center pr-1 pl-[3px] text-[#808080]">
          <svg width="11" height="11" viewBox="0 0 11 11"><path d="M5.500 0v11M0 5.500h11" stroke="#10a828" /></svg>
          <button className="ml-[5px]">click to add...</button>
          <span className="ml-auto">10 / 139</span>
        </div>
      </div>
      <Tabs first="Symbols" rest={["Details", "Trading", "Ticks"]} />
    </section>
  );
}

/* ---------- navigator ---------- */

const FOLDER = (
  <g stroke="#e0a400"><path d="M1 3.500h7l2 2.500h9v12H1z" fill="#fcc80c" /><path d="M1 8h7l2-2" /></g>
);

type Node = { label: string; icon: React.ReactNode; sign: "+" | "-" | ""; depth: number; selected?: boolean };
const NODES: Node[] = [
  { label: "Accounts", sign: "+", depth: 0, selected: true, icon: <g fill="#c4e6fc"><circle cx="7" cy="6" r="3.500" /><path d="M1 17c0-8 12-8 12 0z" /><circle cx="13" cy="7.500" r="3.500" /><path d="M7 18.500c0-8 12-8 12 0z" /></g> },
  { label: "Subscriptions", sign: "+", depth: 0, icon: <path d="M7 3a7.500 7.500 0 1 0 7 1M18 2.500h-5v5" stroke="#20b040" strokeWidth="1.800" /> },
  { label: "Indicators", sign: "+", depth: 0, icon: <g><path d="M1 16c5 0 4-10 7-10s3 8 6 7 2-8 5-9" /><path d="M2 11l4-5 5 8 5-9" stroke="#20b040" /></g> },
  { label: "Expert Advisors", sign: "-", depth: 0, icon: CAP },
  { label: "Advisors", sign: "+", depth: 1, icon: FOLDER },
  { label: "Examples", sign: "+", depth: 1, icon: FOLDER },
  { label: "expert_zmq", sign: "", depth: 1, icon: CAP },
  { label: "Scripts", sign: "+", depth: 0, icon: <path d="M6 2.500h10v12H6zM2 14.500h11v3H2z" fill="#fcc00c" stroke="#e0a000" /> },
  { label: "Services", sign: "", depth: 0, icon: <g fill="#c4e6fc"><path d="M10 1.500l2.500 2.500 3.500-.5.500 3.500 2.500 3-2.500 3-.5 3.500-3.500-.5L10 18.500 7.500 16l-3.500.5L3.500 13 1 10l2.500-3L4 3.500l3.500.5z" /><circle cx="10" cy="10" r="4" /><path d="M8.800 7.500l4 2.500-4 2.500z" fill="#1d78b5" /></g> },
  { label: "Market", sign: "+", depth: 0, icon: BAG },
  { label: "Signals", sign: "+", depth: 0, icon: WAVES },
];

function Navigator() {
  return (
    <section className="flex min-h-0 flex-1 flex-col border-t border-[#909090] px-[3px] pt-px">
      <Caption title="Navigator" active />
      <div className="min-h-0 flex-1 overflow-hidden border-t border-l border-[#808080] bg-white">
        <div className="flex h-[17px] items-center gap-1 pl-px">
          <svg width="14" height="14" viewBox="0 0 14 14">
            <path d="M1 2l6-1v4l-3 1 3 3v4L1 7z" fill="#fcc00c" />
            <path d="M1 2l6 4-3 1z" fill="#1d78d5" />
            <path d="M7 5l6-4v6l-6 6z" fill="#28b048" />
            <path d="M6 8l3-3v5l-2 3z" fill="#1d78d5" />
          </svg>
          MetaTrader 5
        </div>
        <ul>
          {NODES.map((n, i) => (
            <li key={n.label} className="flex h-[17px] items-center">
              <span className="flex h-[17px] w-[19px] shrink-0 items-center justify-end">
                {n.depth > 0 && <span className="mr-[10px] h-full border-l border-dotted border-[#909090]" />}
                {n.depth === 0 && <Branch sign={n.sign} last={i === NODES.length - 1} />}
              </span>
              {n.depth > 0 && (
                <span className="flex h-[17px] w-[18px] shrink-0 justify-end"><Branch sign={n.sign} last={n.label === "expert_zmq"} /></span>
              )}
              <Ico size={15}>{n.icon}</Ico>
              <button
                className={`h-[15px] px-px leading-[15px] ${n.selected ? "bg-[#0a246a] pr-[5px] text-white outline-1 -outline-offset-1 outline-dotted outline-[#d0b060]" : "text-black"}`}
              >
                {n.label}
              </button>
            </li>
          ))}
        </ul>
      </div>
      <Tabs first="Common" rest={["Favorites"]} />
    </section>
  );
}

function Branch({ sign, last }: { sign: string; last?: boolean }) {
  return (
    <svg width="15" height="17" viewBox="0 0 15 17" fill="none" shapeRendering="crispEdges" className="shrink-0">
      <path d={last ? "M4.500 0V9M5 9.500h10" : "M4.500 0V17M5 9.500h10"} stroke="#909090" strokeDasharray="1 1" />
      {sign && <rect x=".5" y="5.500" width="8" height="8" fill="#fff" stroke="#808080" />}
      {sign && <path d={sign === "+" ? "M2 9.500h5M4.500 7v5" : "M2 9.500h5"} stroke="#000" />}
    </svg>
  );
}

/* ---------- terminal ---------- */

const COLS: [string, string, string][] = [
  ["Symbol", "w-[215px]", "text-left"],
  ["Ticket", "w-[148px]", "text-left"],
  ["Time", "w-[132px]", "text-right"],
  ["Type", "w-[165px]", "text-right"],
  ["Volume", "w-[164px]", "text-right"],
  ["Price", "w-[165px]", "text-right"],
  ["S / L", "w-[165px]", "text-right"],
  ["T / P", "w-[165px]", "text-right"],
];

function Terminal() {
  return (
    <section className="flex h-[82px] shrink-0 border-t border-white">
      <div className="flex w-[14px] shrink-0 flex-col pt-[2px]">
        <CloseX />
        <div className="mt-px flex-1 bg-linear-to-b from-[#b8b8b8] to-[#989898]" />
      </div>
      <div className="mt-[2px] min-w-0 flex-1 border-t border-l border-[#808080] bg-white">
        <table className="w-full table-fixed border-separate border-spacing-0">
          <thead>
            <tr className="h-4 leading-[12px]">
              {COLS.map(([label, w, align]) => (
                <th
                  key={label}
                  className={`${w} ${align} border-t border-r border-b-2 border-l border-t-white border-r-[#606060] border-b-[#707070] border-l-white bg-[#d4d0c8] px-[6px] pt-[2px] pb-0 font-normal`}
                >
                  {label}
                  {label === "Symbol" && (
                    <svg width="6" height="3" viewBox="0 0 6 3" className="mb-[3px] ml-[17px] inline"><path d="M0 3h6L3 0z" fill="#000" /></svg>
                  )}
                </th>
              ))}
              <th aria-label="Profit" className="border-t border-b-2 border-l border-t-white border-b-[#707070] border-l-white bg-[#d4d0c8]" />
            </tr>
          </thead>
          <tbody>
            <tr className="bg-[#c8c8c8] text-[11px] font-bold">
              <td colSpan={9} className="border-b border-[#e8e8e8] pt-[2px] pb-0 pl-[7px] leading-[15px] whitespace-pre">
                <span className="mr-2 inline-block size-[3px] rounded-full bg-black align-middle" />
                {"Balance: 10 000.00 EUR  Equity: 10 000.00  Free Margin: 10 000.00"}
              </td>
            </tr>
          </tbody>
        </table>
      </div>
    </section>
  );
}

export default function App() {
  return (
    <div className="flex h-screen flex-col overflow-hidden bg-black pl-[5px] font-['DejaVu_Sans_Condensed','DejaVu_Sans',sans-serif] text-[10px] leading-[15px] text-black select-none">
      <div className="flex h-3 shrink-0 items-end gap-[560px] overflow-hidden bg-[#2f343f] pb-[7px] pl-[10px]">
        <svg width="18" height="18" viewBox="0 0 18 18" className="shrink-0">
          <circle cx="9" cy="8" r="8" fill="#4ab0e8" />
          <path d="M5 10l4 4 8-6-2 7-8 2z" fill="#f8d838" />
          <path d="M3 8l5 6 5-3-5-8z" fill="#f4f4e8" />
        </svg>
        <h1 className="font-['DejaVu_Sans_Mono',monospace] text-[12px] leading-[14px] font-bold whitespace-nowrap text-[#c4c8d0]">
          5015868141 - MetaQuotes-Demo: Demo Account - Hedge - MetaQuotes Software Corp.
        </h1>
      </div>
      <div className="flex min-h-0 flex-1 flex-col bg-[#d4d0c8]">
        <nav className="flex h-[19px] shrink-0 items-center gap-[21px] border-b border-[#909090] pt-[3px] pl-[10px]">
          {MENU.map((m) => (
            <button key={m}><span className="underline underline-offset-2">{m[0]}</span>{m.slice(1)}</button>
          ))}
        </nav>
        <Toolbar />
        <div className="flex min-h-0 flex-1">
          <aside className="flex w-[231px] shrink-0 flex-col border-t border-r border-t-[#f0eee8] border-r-[#f0eee8]">
            <MarketWatch />
            <Navigator />
            <div className="h-1 shrink-0" />
          </aside>
          <main className="flex min-w-0 flex-1 flex-col">
            <div className="min-h-0 flex-1 overflow-hidden border-t border-l-2 border-[#404040] bg-[#808080] pt-px">
              <div className="grid grid-cols-[446px_446px] grid-rows-[259px_259px]">
                {CHARTS.map((c) => (
                  <ChartWindow key={c.symbol} spec={c} />
                ))}
              </div>
            </div>
            <div role="tablist" className="flex h-[19px] shrink-0 border-t-2 border-t-[#f0eee8]">
              <div className="flex flex-1 border-t border-[#202020] pl-1">
                <button role="tab" aria-selected="true" className="-mt-px h-4 w-[76px] border-r-2 border-b-2 border-l border-[#303030] bg-white text-black">
                  EURUSD,H1
                </button>
                {["USDCHF,H1", "GBPUSD,H1", "USDJPY,H1"].map((t, i) => (
                  <span key={t} className="flex pl-[11px] text-[#606060]">
                    {i > 0 && <span className="mr-[11px]">|</span>}
                    <button role="tab" aria-selected="false">{t}</button>
                  </span>
                ))}
              </div>
            </div>
          </main>
        </div>
        <Terminal />
      </div>
    </div>
  );
}
